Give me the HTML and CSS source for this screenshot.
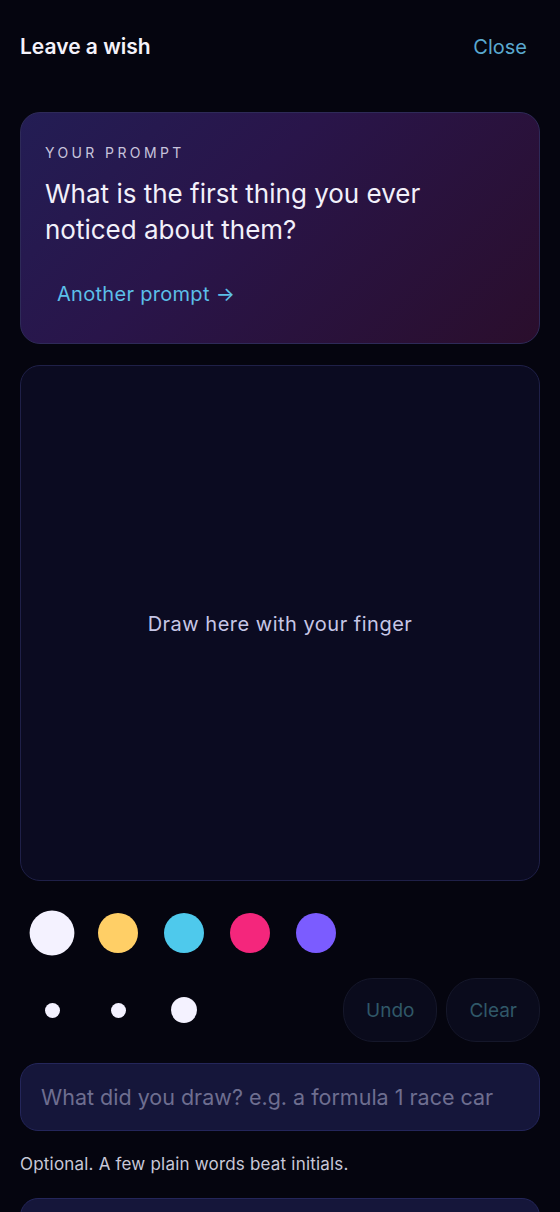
FILE: index.html
```html
<!DOCTYPE html>
<html lang="en">
<head>
    <meta charset="UTF-8">
    <meta name="viewport" content="width=device-width, initial-scale=1.0">
    <title>Leave a wish</title>
    <link rel="stylesheet" href="styles.css">
</head>
<body>
    <div class="page">
        <header class="top-bar">
            <h1 class="title">Leave a wish</h1>
            <button class="close-btn">Close</button>
        </header>

        <section class="prompt-card">
            <div class="prompt-label">YOUR PROMPT</div>
            <p class="prompt-text">What is the first thing you ever noticed about them?</p>
            <button class="another-btn">Another prompt &rarr;</button>
        </section>

        <div class="canvas">
            <span class="canvas-hint">Draw here with your finger</span>
        </div>

        <div class="swatches">
            <button class="swatch selected" style="background:#f4f2ff"></button>
            <button class="swatch" style="background:#ffcf66"></button>
            <button class="swatch" style="background:#4ec9ec"></button>
            <button class="swatch" style="background:#f4267c"></button>
            <button class="swatch" style="background:#7b5cff"></button>
        </div>

        <div class="tools">
            <div class="sizes">
                <button class="size"><span class="dot small"></span></button>
                <button class="size"><span class="dot small"></span></button>
                <button class="size"><span class="dot large"></span></button>
            </div>
            <div class="actions">
                <button class="pill-btn" disabled>Undo</button>
                <button class="pill-btn" disabled>Clear</button>
            </div>
        </div>

        <input class="field" type="text" placeholder="What did you draw? e.g. a formula 1 race car">
        <p class="help">Optional. A few plain words beat initials.</p>
        <input class="field" type="text" placeholder="">
    </div>
</body>
</html>
```

FILE: styles.css
```css
body {
    margin: 0;
    background-color: #05050f;
    font-family: Inter, "Noto Sans", sans-serif;
    color: #f0eef8;
}
.page {
    padding: 0 20px;
}
button {
    font-family: inherit;
    background: none;
    border: none;
    cursor: pointer;
}
.top-bar {
    display: flex;
    justify-content: space-between;
    align-items: center;
    padding-top: 28px;
    height: 36px;
    margin-bottom: 48px;
}
.title {
    margin: 0;
    font-size: 21px;
    font-weight: 600;
    color: #f4f2fa;
}
.close-btn {
    padding: 0;
    margin-top: 2px;
    font-size: 20px;
    color: #5aa9cf;
    margin-right: 13px;
}
.prompt-card {
    height: 232px;
    box-sizing: border-box;
    padding: 30px 24px 0;
    border-radius: 20px;
    border: 1px solid #2e2a58;
    background: linear-gradient(135deg, #231d54 0%, #29154a 40%, #2a0e2c 100%);
}
.prompt-label {
    font-size: 14px;
    line-height: 20px;
    letter-spacing: 3.4px;
    color: #c8c4dc;
}
.prompt-text {
    margin: 13px 0 0;
    font-size: 26px;
    line-height: 36px;
    color: #f2f0fa;
    max-width: 400px;
}
.another-btn {
    margin-top: 20px;
    padding: 12px;
    font-size: 20px;
    line-height: 28px;
    letter-spacing: 0.3px;
    color: #5cbfe8;
}
.canvas {
    margin-top: 21px;
    height: 516px;
    box-sizing: border-box;
    border: 1px solid #1f2048;
    border-radius: 20px;
    background-color: #0b0b21;
    display: flex;
    align-items: center;
    justify-content: center;
}
.canvas-hint {
    font-size: 20px;
    letter-spacing: 0.5px;
    color: #c6c6e6;
    margin-top: 1px;
}
.swatches {
    display: flex;
    gap: 22px;
    margin-top: 30px;
    padding-left: 10px;
}
.swatch {
    width: 40px;
    height: 40px;
    margin: 2px;
    border-radius: 50%;
    padding: 0;
}
.swatch.selected {
    transform: scale(1.12);
}
.tools {
    display: flex;
    justify-content: space-between;
    align-items: center;
    margin-top: 23px;
}
.sizes {
    display: flex;
    gap: 22px;
    padding-left: 10px;
}
.size {
    width: 44px;
    height: 44px;
    padding: 0;
    display: flex;
    align-items: center;
    justify-content: center;
}
.dot {
    display: block;
    border-radius: 50%;
    background-color: #f4f2ff;
}
.dot.small {
    width: 15px;
    height: 15px;
}
.dot.large {
    width: 26px;
    height: 26px;
}
.actions {
    display: flex;
    gap: 9px;
}
.pill-btn {
    height: 64px;
    padding: 0 22px;
    border-radius: 30px;
    border: 1px solid #15172a;
    background-color: #0a0b1c;
    font-size: 19px;
    color: #305868;
}
.field {
    display: block;
    width: 100%;
    box-sizing: border-box;
    height: 68px;
    margin-top: 21px;
    padding: 0 20px;
    border-radius: 18px;
    border: 1px solid #24265a;
    background-color: #15163a;
    font-family: inherit;
    font-size: 21.5px;
    color: #e8e8f4;
    outline: none;
}
.field::placeholder {
    color: #6e6e90;
}
.help {
    margin: 21px 0 0;
    font-size: 17px;
    line-height: 24px;
    letter-spacing: 0.2px;
    color: #c8c8d8;
}
.help + .field {
    margin-top: 22px;
}
```
